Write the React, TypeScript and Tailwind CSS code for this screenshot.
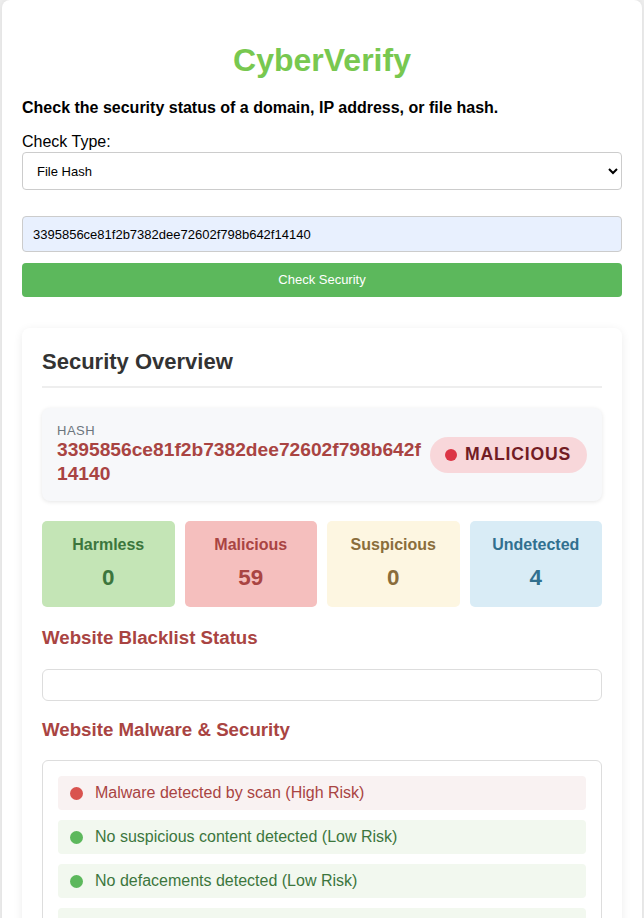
import { useState } from "react";

const stats = [
  { label: "Harmless", value: 0, box: "bg-[#c4e5b6]", text: "text-[#3c763d]" },
  { label: "Malicious", value: 59, box: "bg-[#f5bfbe]", text: "text-[#a94442]" },
  { label: "Suspicious", value: 0, box: "bg-[#fdf6e1]", text: "text-[#8a6d3b]" },
  { label: "Undetected", value: 4, box: "bg-[#d9ecf6]", text: "text-[#31708f]" },
];

const checks = [
  { text: "Malware detected by scan (High Risk)", bad: true },
  { text: "No suspicious content detected (Low Risk)", bad: false },
  { text: "No defacements detected (Low Risk)", bad: false },
  { text: "No phishing detected (Low Risk)", bad: false },
];

export default function App() {
  const [type, setType] = useState("hash");
  const [query, setQuery] = useState("3395856ce81f2b7382dee72602f798b642f14140");

  return (
    <div className="min-h-screen bg-[#efefef] font-['Liberation_Sans',Arial,sans-serif]">
      <div className="ml-[2px] w-[640px] rounded-t-[8px] bg-white px-[20px] pt-[42px] pb-[40px] shadow-[0_0_8px_rgba(0,0,0,0.08)]">
        <h1 className="text-center text-[32px] leading-[36px] font-bold text-[#78c850]">CyberVerify</h1>

        <p className="mt-[21px] text-[16px] leading-[18px] font-bold text-black">
          Check the security status of a domain, IP address, or file hash.
        </p>

        <label className="mt-[16px] block text-[16px] leading-[18px] text-black">Check Type:</label>
        <select
          value={type}
          onChange={(e) => setType(e.target.value)}
          className="mt-[1px] block h-[38px] w-full rounded-[4px] border border-[#ccc] bg-white px-[10px] text-[13px] text-black"
        >
          <option value="domain">Domain</option>
          <option value="ip">IP Address</option>
          <option value="hash">File Hash</option>
        </select>

        <input
          value={query}
          onChange={(e) => setQuery(e.target.value)}
          className="mt-[26px] block h-[36px] w-full rounded-[4px] border border-[#ccc] bg-[#e8f0fe] px-[10px] text-[13px] text-black outline-none"
        />

        <button className="mt-[11px] block h-[34px] w-full rounded-[4px] bg-[#5cb85c] text-[13px] text-white">
          Check Security
        </button>

        {/* results */}
        <div className="mt-[31px] rounded-[8px] bg-white px-[20px] pt-[21px] pb-[20px] shadow-[0_2px_10px_rgba(0,0,0,0.08)]">
          <h2 className="text-[22px] leading-[26px] font-bold text-[#333]">Security Overview</h2>
          <div className="mt-[11px] h-[2px] bg-[#eee]" />

          <div className="mt-[20px] flex items-center gap-[4px] rounded-[8px] bg-[#f7f8fa] p-[15px] shadow-[0_1px_4px_rgba(0,0,0,0.1)]">
            <div className="min-w-0 flex-1">
              <div className="text-[13px] leading-[15px] tracking-[0.5px] text-[#6c757d]">HASH</div>
              <div className="text-[19.2px] leading-[24px] font-bold break-all text-[#a94442]">{query}</div>
            </div>
            <div className="flex h-[36px] items-center gap-[8px] rounded-full bg-[#f8d7da] pr-[16px] pl-[15px]">
              <span className="h-[12px] w-[12px] rounded-full bg-[#dc3545]" />
              <span className="text-[17.6px] font-bold tracking-[0.8px] text-[#721c24]">MALICIOUS</span>
            </div>
          </div>

          <div className="mt-[20px] grid grid-cols-4 gap-[10px]">
            {stats.map((s) => (
              <div key={s.label} className={`rounded-[5px] ${s.box} px-[8px] pt-[15px] pb-[15px] text-center ${s.text}`}>
                <div className="text-[16px] leading-[18px] font-bold">{s.label}</div>
                <div className="mt-[10px] text-[22.4px] leading-[28px] font-bold">{s.value}</div>
              </div>
            ))}
          </div>

          <h3 className="mt-[20px] text-[18.7px] leading-[22px] font-bold text-[#a94442]">Website Blacklist Status</h3>
          <div className="mt-[20px] h-[32px] rounded-[6px] border border-[#ddd]" />

          <h3 className="mt-[18px] text-[18.7px] leading-[22px] font-bold text-[#a94442]">Website Malware &amp; Security</h3>
          <div className="mt-[19px] flex flex-col gap-[10px] rounded-[6px] border border-[#ddd] p-[15px]">
            {checks.map((c) => (
              <div
                key={c.text}
                className={`flex h-[34px] items-center gap-[12px] rounded-[4px] px-[12px] text-[16px] ${
                  c.bad ? "bg-[#f9f2f2] text-[#a94442]" : "bg-[#f2f8ef] text-[#3c763d]"
                }`}
              >
                <span className={`h-[13px] w-[13px] rounded-full ${c.bad ? "bg-[#d9534f]" : "bg-[#5cb85c]"}`} />
                {c.text}
              </div>
            ))}
          </div>
        </div>
      </div>
    </div>
  );
}
